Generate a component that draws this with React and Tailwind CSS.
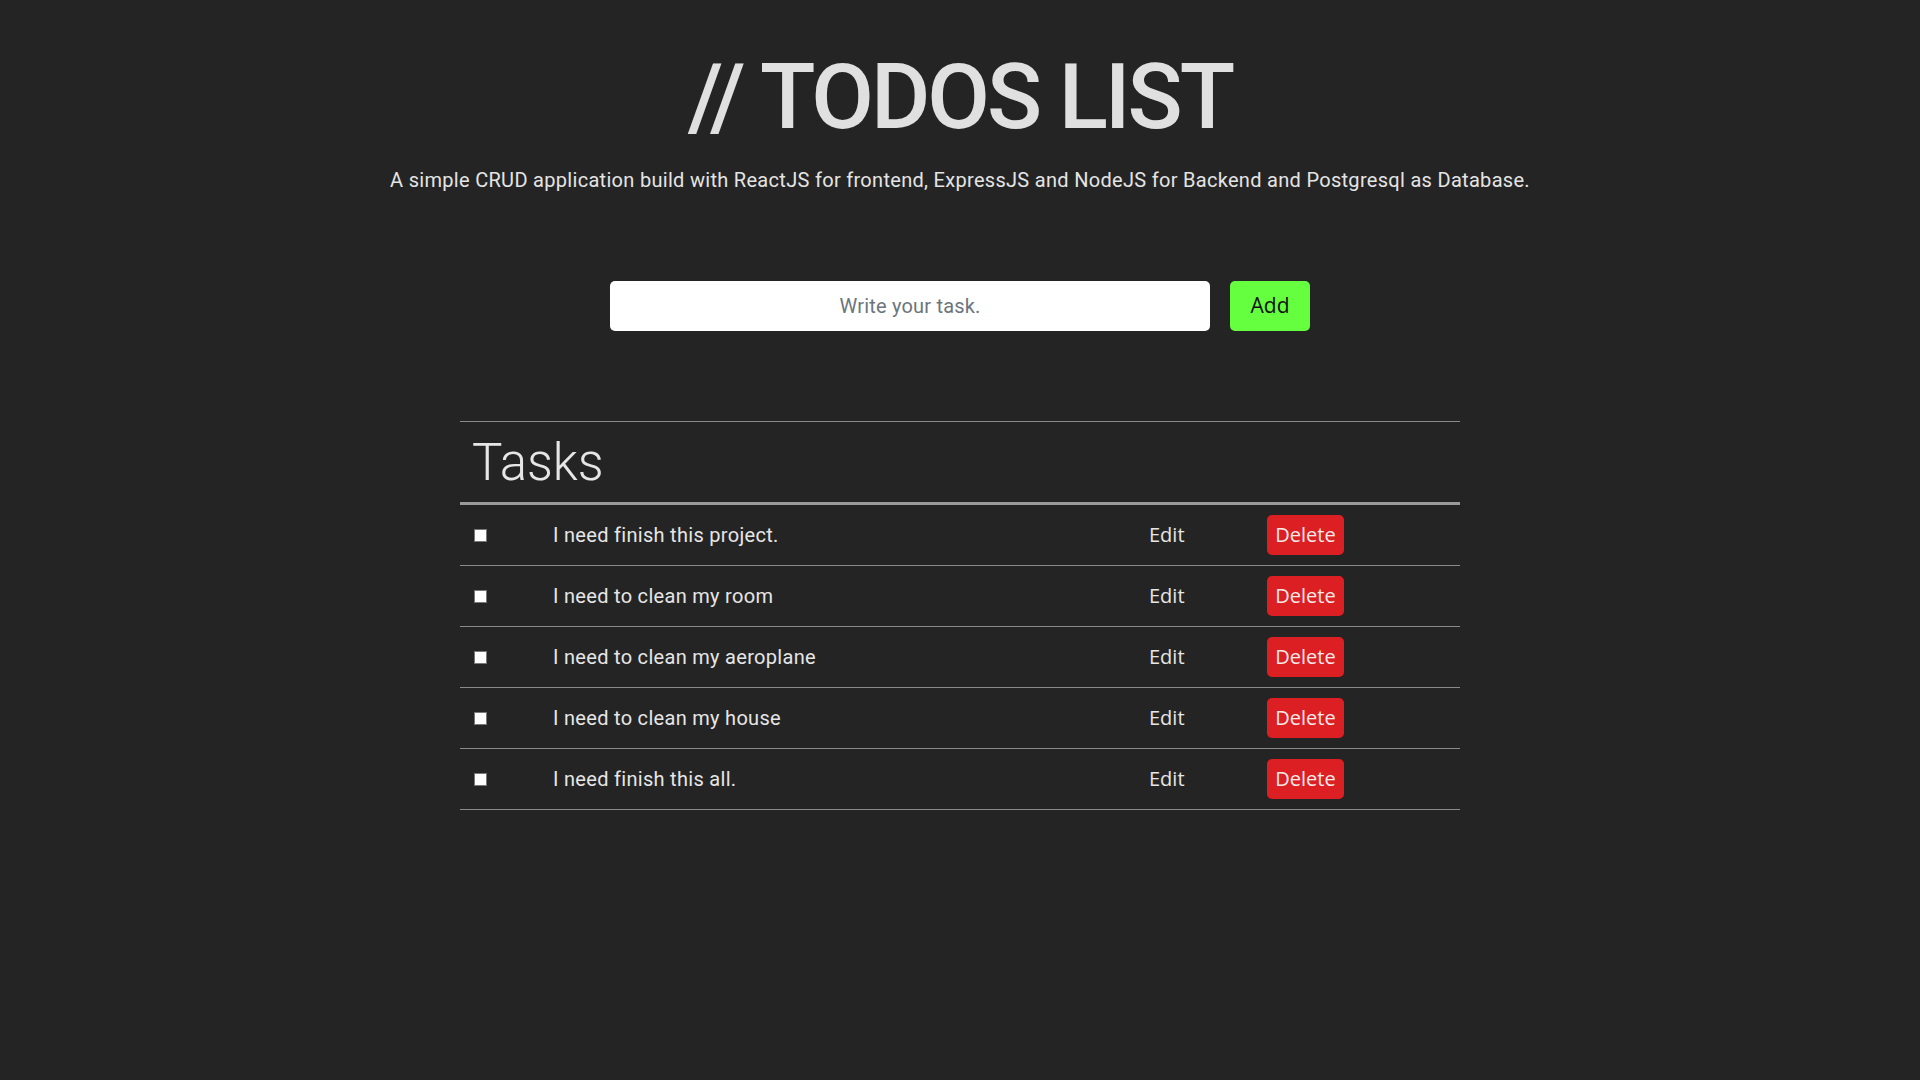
import { useState } from 'react'

const INITIAL = [
  { id: 1, text: 'I need finish this project.' },
  { id: 2, text: 'I need to clean my room' },
  { id: 3, text: 'I need to clean my aeroplane' },
  { id: 4, text: 'I need to clean my house' },
  { id: 5, text: 'I need finish this all.' },
]

const btnFont = { fontFamily: '"Open Sans", "Noto Sans", sans-serif' }

export default function App() {
  const [todos, setTodos] = useState(INITIAL)
  const [task, setTask] = useState('')

  function handleAdd(e) {
    e.preventDefault()
    if (!task.trim()) return
    setTodos([...todos, { id: Date.now(), text: task.trim() }])
    setTask('')
  }

  return (
    <div
      className="min-h-screen bg-[#242424] text-[#e4e4e4]"
      style={{ fontFamily: 'Roboto, "Liberation Sans", sans-serif' }}
    >
      {/* Header */}
      <header className="pt-[43px] text-center">
        <h1 className="text-[91px] leading-[1.2] font-medium tracking-[-3px] text-[#e0e0e0]">// TODOS LIST</h1>
        <p className="mt-[13px] text-[20px] leading-[30px] tracking-[0.3px]">
          A simple CRUD application build with ReactJS for frontend, ExpressJS and NodeJS for Backend and Postgresql as Database.
        </p>
      </header>

      {/* Add form */}
      <form onSubmit={handleAdd} className="mt-[86px] flex justify-center gap-[20px]">
        <input
          type="text"
          value={task}
          onChange={e => setTask(e.target.value)}
          placeholder="Write your task."
          className="w-[600px] h-[50px] rounded-[5px] bg-white text-center text-[20px] tracking-[0.2px] text-[#333] placeholder-[#6c757d] outline-none"
        />
        <button
          type="submit"
          style={btnFont}
          className="w-[80px] h-[50px] rounded-[5px] bg-[#66ff40] text-[21px] text-[#111]"
        >
          Add
        </button>
      </form>

      {/* Tasks table */}
      <div className="w-[1000px] mx-auto mt-[90px]">
        <div className="border-t border-[#8a8a8a] h-[81px] px-[12px] flex items-center">
          <h2 className="text-[51px] leading-none font-light text-[#e6e6e6]">Tasks</h2>
        </div>
        <div className="h-[3px] bg-[#9a9a9a]" />
        {todos.map(todo => (
          <div
            key={todo.id}
            className="grid grid-cols-[93px_596px_118px_1fr] items-center h-[61px] border-b border-[#8a8a8a]"
          >
            <div className="pl-[14px] flex items-center">
              <span className="block w-[13px] h-[13px] bg-white border border-[#777]" />
            </div>
            <span className="text-[20px] tracking-[0.3px] text-[#e6e6e6]">{todo.text}</span>
            <div>
              <button style={btnFont} className="text-[20px] text-[#e6e6e6]">Edit</button>
            </div>
            <div>
              <button
                style={btnFont}
                onClick={() => setTodos(todos.filter(t => t.id !== todo.id))}
                className="w-[77px] h-[40px] rounded-[5px] bg-[#dc1f22] text-[20px] text-[#f8eaea]"
              >
                Delete
              </button>
            </div>
          </div>
        ))}
      </div>
    </div>
  )
}
